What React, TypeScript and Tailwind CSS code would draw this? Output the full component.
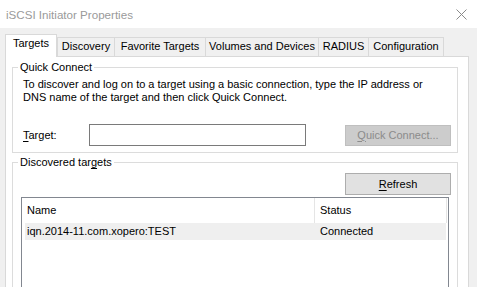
const TABS = [
  { label: "Discovery", w: "w-[58px]" },
  { label: "Favorite Targets", w: "w-[92px]" },
  { label: "Volumes and Devices", w: "w-[114px]" },
  { label: "RADIUS", w: "w-[51px]" },
  { label: "Configuration", w: "w-[76px]" },
];

export default function App() {
  return (
    <div className="flex h-[287px] w-[477px] flex-col overflow-hidden bg-[#f0f0f0] font-['Liberation_Sans',Arial,sans-serif] text-[11px] leading-[15px] text-black">
      {/* title bar */}
      <div className="flex h-[28px] shrink-0 items-center justify-between bg-white pl-[6px] pr-[10px]">
        <span className="text-[11.6px] text-[#9a9a9a]">iSCSI Initiator Properties</span>
        <svg width="11" height="11" viewBox="0 0 11 11" className="mt-px">
          <path d="M0.5 0.5L10.5 10.5M10.5 0.5L0.5 10.5" stroke="#8a8a8a" strokeWidth="1" />
        </svg>
      </div>

      <div className="flex flex-1 flex-col pl-[5px] pr-[8px] pt-[6px]">
        {/* tabs */}
        <div className="flex h-[22px] shrink-0 items-end">
          <div className="relative z-10 -mb-px h-[23px] w-[52px] border border-b-0 border-[#d9d9d9] bg-white pt-px text-center">
            Targets
          </div>
          {TABS.map((t, i) => (
            <div
              key={t.label}
              className={`h-[19px] ${t.w} ${i === 0 ? "" : "-ml-px"} border border-b-0 border-[#d9d9d9] bg-[#f0f0f0] pt-px text-center`}
            >
              {t.label}
            </div>
          ))}
        </div>

        {/* tab panel */}
        <div className="flex flex-1 flex-col border border-[#d9d9d9] bg-white pl-[6px] pr-[10px]">
          <fieldset className="mt-[3px] border border-[#dcdcdc]">
            <legend className="ml-[5px] px-[2px]">Quick Connect</legend>
            <div className="pb-[6px] pl-[10px] pr-[6px] pt-[3px]">
              <p className="leading-[13px]">
                To discover and log on to a target using a basic connection, type the IP address or
                <br />
                DNS name of the target and then click Quick Connect.
              </p>
              <div className="mt-[20px] flex h-[22px] items-center">
                <span className="w-[66px]">
                  <u className="underline-offset-2">T</u>arget:
                </span>
                <div className="h-[22px] w-[217px] border border-[#7a7a7a] bg-white" />
                <div className="ml-auto flex h-[21px] w-[106px] items-center justify-center border border-[#bfbfbf] bg-[#cccccc] text-[#8b8b8b]">
                  <span>
                    <u className="underline-offset-2">Q</u>uick Connect...
                  </span>
                </div>
              </div>
            </div>
          </fieldset>

          <fieldset className="mt-[2px] border border-[#dcdcdc]">
            <legend className="ml-[5px] px-[2px]">
              Discovered tar<u className="underline-offset-2">g</u>ets
            </legend>
            <div className="pb-[6px] pl-[8px] pr-[6px] pt-[3px]">
              <div className="flex justify-end">
                <div className="flex h-[22px] w-[106px] items-center justify-center border border-[#adadad] bg-[#e1e1e1]">
                  <span>
                    <u className="underline-offset-2">R</u>efresh
                  </span>
                </div>
              </div>
              <div className="mr-[2px] mt-[2px] h-[120px] border border-[#828790] bg-white">
                <div className="flex h-[25px] items-center">
                  <div className="h-full w-[293px] border-r border-[#e5e5e5] pl-[5px] pt-[5px]">Name</div>
                  <div className="h-full w-[132px] border-r border-[#e5e5e5] pl-[5px] pt-[5px]">Status</div>
                </div>
                <div className="ml-[3px] flex h-[17px] w-[421px] items-center bg-[#efefef]">
                  <div className="w-[290px] pl-[2px]">iqn.2014-11.com.xopero:TEST</div>
                  <div className="pl-[5px]">Connected</div>
                </div>
              </div>
            </div>
          </fieldset>
        </div>
      </div>
    </div>
  );
}
